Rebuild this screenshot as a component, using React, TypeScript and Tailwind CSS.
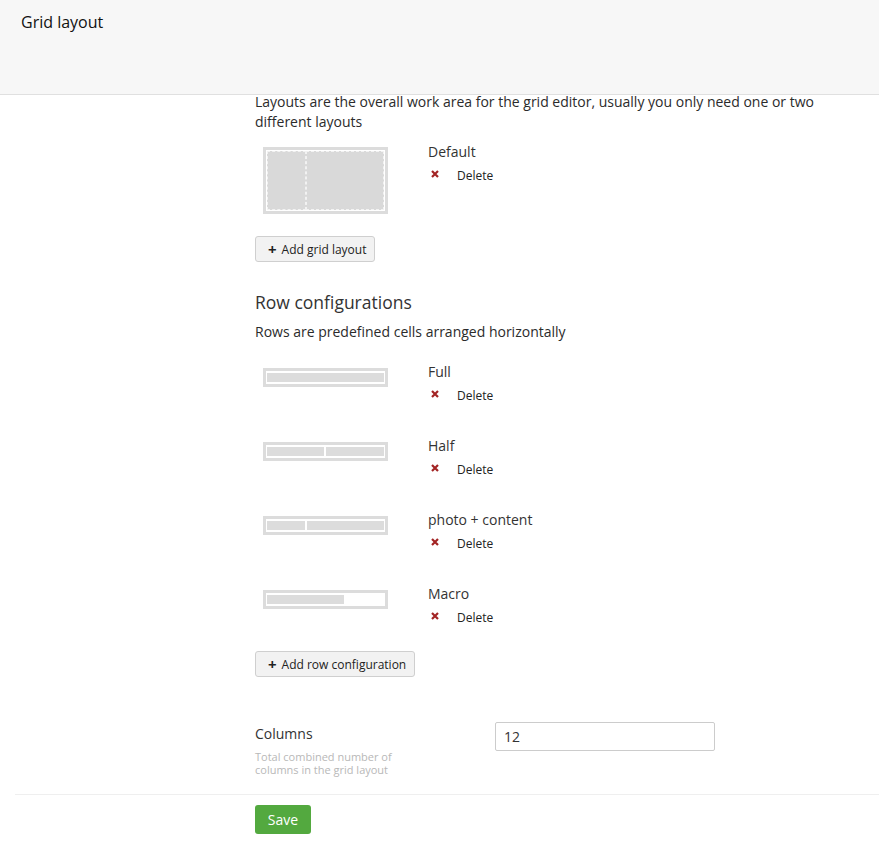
import React from 'react'

const font = { fontFamily: '"Open Sans", "Liberation Sans", sans-serif' }

const DeleteLink = () => (
  <div className="mt-[4px] flex items-center text-[12px] leading-[20px] text-[#222]">
    <svg className="ml-[3px] mt-[-5px] h-[8px] w-[8px]" viewBox="0 0 8 8">
      <path d="M1 1 L7 7 M7 1 L1 7" stroke="#a32424" strokeWidth="2.2" strokeLinecap="butt" />
    </svg>
    <span className="ml-[18px]">Delete</span>
  </div>
)

const RowPreview = ({ cells }: { cells: number[] }) => (
  <div className="ml-[8px] mt-[6px] flex h-[19px] w-[125px] gap-[2px] border-[3px] border-[#dcdcdc] px-[1px] py-[2px]">
    {cells.map((w, i) => (
      <div key={i} className="h-full bg-[#dcdcdc]" style={{ width: `${w}%` }} />
    ))}
  </div>
)

const rows = [
  { name: 'Full', cells: [100] },
  { name: 'Half', cells: [49, 49] },
  { name: 'photo + content', cells: [32.5, 66] },
  { name: 'Macro', cells: [66] },
]

const AddButton = ({ label }: { label: string }) => (
  <button className="flex h-[26px] items-center gap-[5px] rounded-[3px] border border-[#cfcfcf] bg-[#f2f2f2] pl-[12px] pr-[8px] pt-[1px] text-[12px] text-[#222]">
    <span className="text-[15px] font-bold leading-none">+</span>
    {label}
  </button>
)

export default function App() {
  return (
    <div className="min-h-screen bg-white text-[#2b2b2b]" style={font}>
      <div className="h-[95px] border-b border-[#e0e0e0] bg-[#f7f7f7] pl-[21px] pt-[11px]">
        <h1 className="text-[16px] leading-[22px] text-[#111]">Grid layout</h1>
      </div>

      <div className="pl-[255px]">
        <p className="mt-[-3px] w-[580px] text-[14px] leading-[20px]">
          Layouts are the overall work area for the grid editor, usually you only need one or two different layouts
        </p>

        <div className="mt-[10px] flex h-[74px]">
          <div className="w-[173px]">
            <div className="ml-[8px] mt-[5px] flex h-[67px] w-[125px] border-[3px] border-[#dcdcdc] p-[1px]">
              <div className="h-full w-1/3 border border-dashed border-[#f2f2f2] bg-[#d9d9d9]" />
              <div className="h-full w-2/3 border border-dashed border-[#f2f2f2] bg-[#d9d9d9]" />
            </div>
          </div>
          <div>
            <div className="text-[14px] leading-[20px] text-[#333]">Default</div>
            <DeleteLink />
          </div>
        </div>

        <div className="mt-[20px]">
          <AddButton label="Add grid layout" />
        </div>

        <h2 className="mt-[30px] text-[17.5px] leading-[20px] text-[#333]">Row configurations</h2>
        <p className="mt-[10px] text-[14px] leading-[20px]">Rows are predefined cells arranged horizontally</p>

        <div className="mt-[20px] flex flex-col gap-[20px]">
          {rows.map((r) => (
            <div key={r.name} className="flex h-[54px]">
              <div className="w-[173px]">
                <RowPreview cells={r.cells} />
              </div>
              <div>
                <div className="text-[14px] leading-[20px] text-[#333]">{r.name}</div>
                <DeleteLink />
              </div>
            </div>
          ))}
        </div>

        <div className="mt-[13px]">
          <AddButton label="Add row configuration" />
        </div>

        <div className="mt-[45px] flex">
          <div className="w-[240px] pt-[2px]">
            <div className="text-[14px] leading-[20px] text-[#333]">Columns</div>
            <div className="mt-[6px] w-[160px] text-[11px] leading-[13px] text-[#b8b8b8]">
              Total combined number of columns in the grid layout
            </div>
          </div>
          <input
            defaultValue="12"
            className="h-[29px] w-[220px] rounded-[2px] border border-[#cccccc] px-[8px] text-[14px] text-[#333] outline-none"
          />
        </div>
      </div>

      <div className="ml-[15px] mt-[18px] border-t border-[#efefef]" />

      <div className="pl-[255px] pt-[10px]">
        <button className="h-[29px] w-[56px] rounded-[3px] bg-[#53a93f] text-[14px] text-white">Save</button>
      </div>
    </div>
  )
}
